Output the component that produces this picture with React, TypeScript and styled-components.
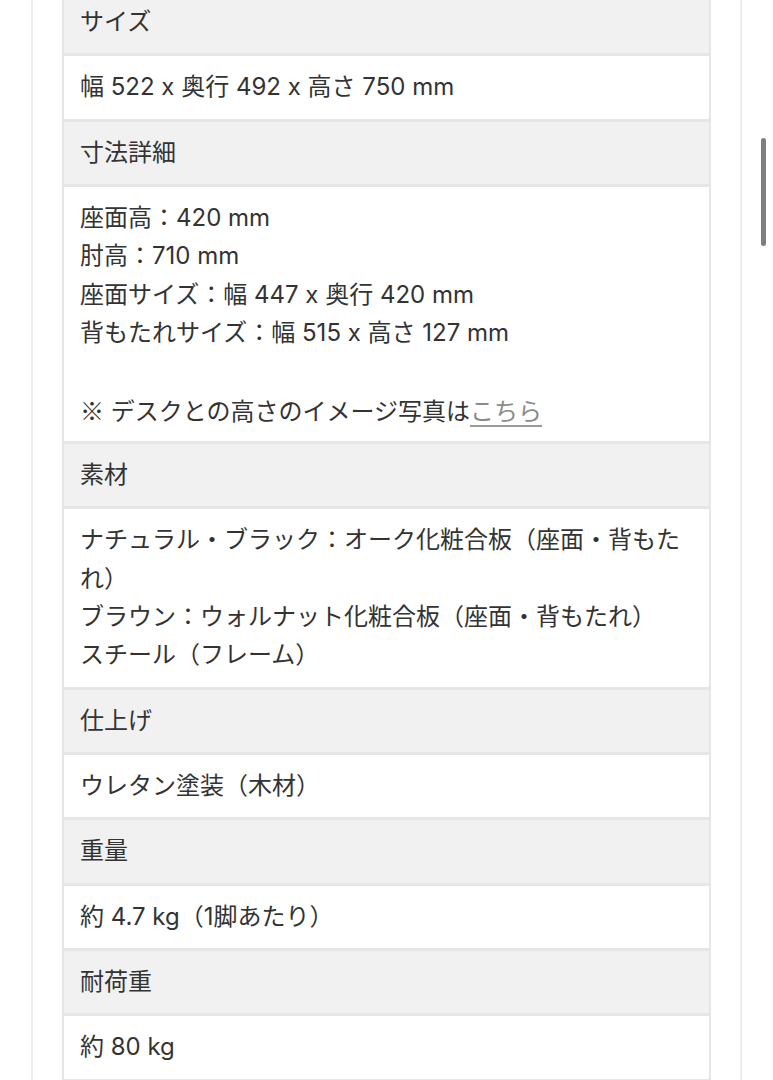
import React from 'react';
import styled, { createGlobalStyle } from 'styled-components';

const GlobalStyle = createGlobalStyle`
  html, body {
    margin: 0;
    padding: 0;
    overflow: hidden;
    background: #fff;
  }
  body {
    font-family: Inter, "Noto Sans CJK JP", sans-serif;
    color: #333;
  }
`;

const Page = styled.div`
  margin-left: 31px;
  width: 711px;
  box-sizing: border-box;
  min-height: 1200px;
  border-left: 2px solid #ededed;
  border-right: 2px solid #ededed;
  padding: 0 29px;
`;

const SpecList = styled.dl`
  margin: -11px 0 0;
  border: 2px solid #e6e6e6;
  border-bottom: none;
  font-size: 24px;
  line-height: 38.33px;
`;

const Label = styled.dt`
  background: #f1f1f1;
  padding: 12px 16px;
  border-bottom: 3px solid #e6e6e6;
  font-weight: normal;
`;

const Value = styled.dd`
  margin: 0;
  background: #fff;
  padding: 12px 16px;
  border-bottom: 3px solid #e6e6e6;
`;

const Line = styled.div`
  height: 38.33px;
`;

const WrapLine = styled.div`
  line-height: 38.33px;
`;

const Mark = styled.span`
  font-family: "Noto Sans CJK JP", sans-serif;
`;

const Link = styled.a`
  color: #8a8a8a;
  text-decoration: underline;
  text-decoration-color: #9a9a9a;
  text-underline-offset: 5px;
`;

const ScrollThumb = styled.div`
  position: fixed;
  top: 138px;
  right: 7px;
  width: 5px;
  height: 108px;
  border-radius: 3px;
  background: #7f7f7f;
`;

type Spec = { label: string; lines: React.ReactNode[]; wraps?: boolean };

const specs: Spec[] = [
  { label: 'サイズ', lines: ['幅 522 x 奥行 492 x 高さ 750 mm'] },
  {
    label: '寸法詳細',
    lines: [
      '座面高：420 mm',
      '肘高：710 mm',
      '座面サイズ：幅 447 x 奥行 420 mm',
      '背もたれサイズ：幅 515 x 高さ 127 mm',
      '',
      <>
        <Mark>※</Mark> デスクとの高さのイメージ写真は<Link href="#">こちら</Link>
      </>,
    ],
  },
  {
    label: '素材',
    wraps: true,
    lines: [
      'ナチュラル・ブラック：オーク化粧合板（座面・背もたれ）',
      'ブラウン：ウォルナット化粧合板（座面・背もたれ）',
      'スチール（フレーム）',
    ],
  },
  { label: '仕上げ', lines: ['ウレタン塗装（木材）'] },
  { label: '重量', lines: ['約 4.7 kg（1脚あたり）'] },
  { label: '耐荷重', lines: ['約 80 kg'] },
];

const App = () => {
  return (
    <>
      <GlobalStyle />
      <Page>
        <SpecList>
          {specs.map((s) => (
            <React.Fragment key={s.label}>
              <Label>
                <Line>{s.label}</Line>
              </Label>
              <Value>
                {s.lines.map((line, i) =>
                  s.wraps ? (
                    <WrapLine key={i}>{line}</WrapLine>
                  ) : (
                    <Line key={i}>{line === '' ? '\u00a0' : line}</Line>
                  )
                )}
              </Value>
            </React.Fragment>
          ))}
        </SpecList>
      </Page>
      <ScrollThumb />
    </>
  );
};

export default App;
